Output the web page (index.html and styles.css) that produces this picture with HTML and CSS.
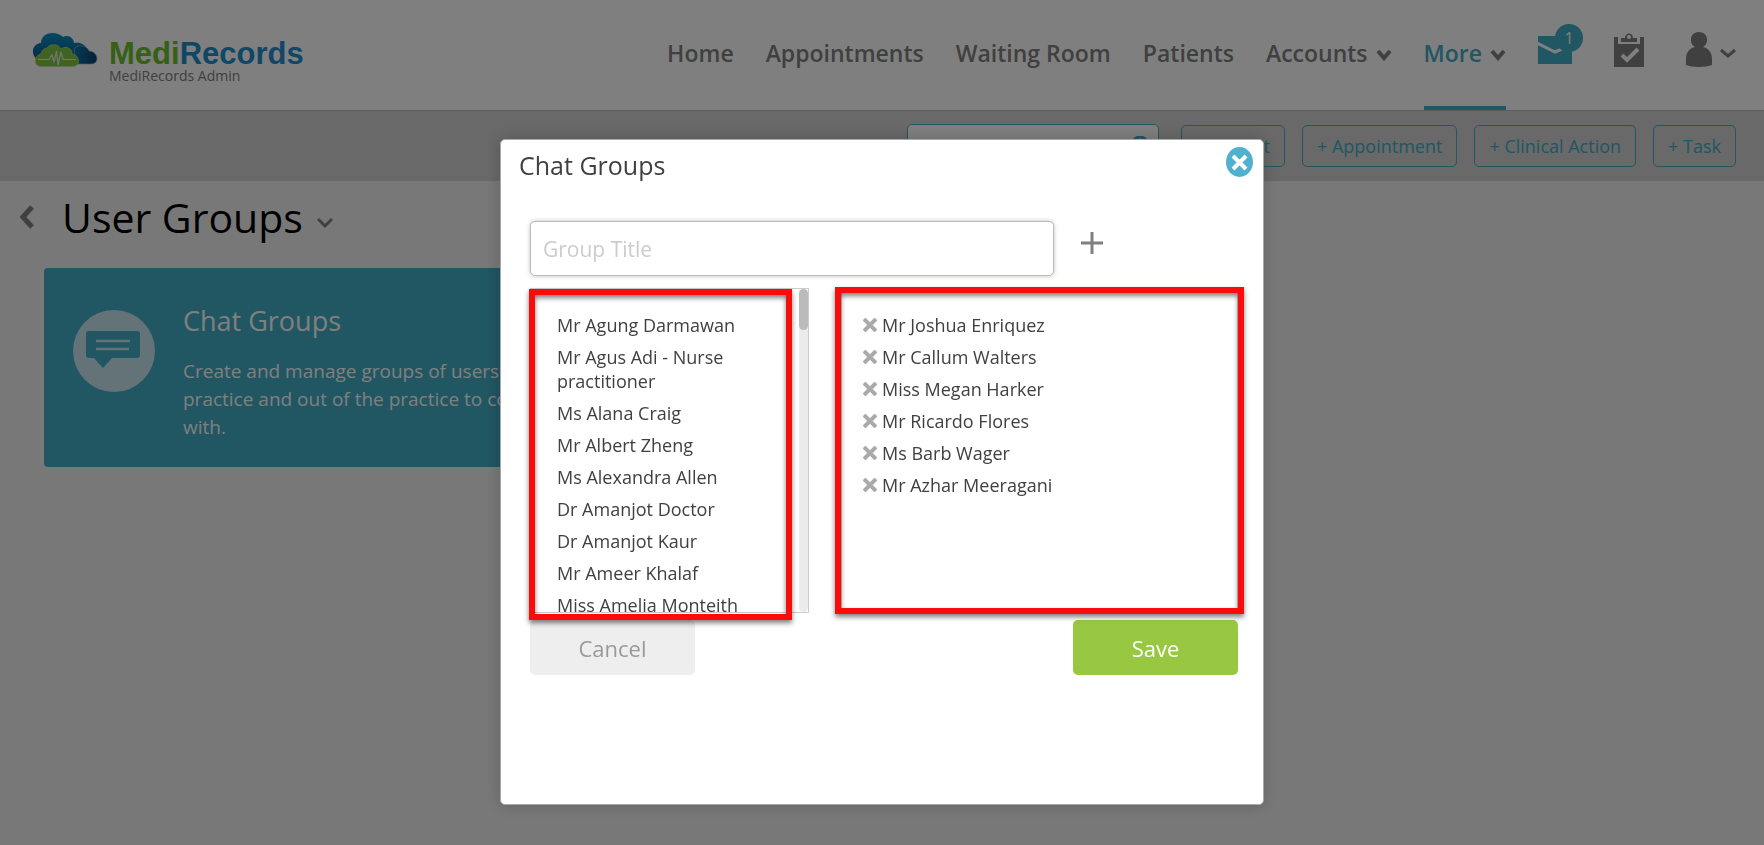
FILE: index.html
```html
<!DOCTYPE html>
<html lang="en">
<head>
    <meta charset="UTF-8">
    <meta name="viewport" content="width=device-width, initial-scale=1.0">
    <title>MediRecords - User Groups</title>
    <link rel="stylesheet" href="styles.css">
</head>
<body>
    <header class="header">
        <a class="logo" href="#">
            <svg class="logo-cloud" viewBox="0 0 66 36" width="66" height="36">
                <defs>
                    <linearGradient id="sky" x1="0" y1="0" x2="0" y2="1">
                        <stop offset="0" stop-color="#0a93c4"/>
                        <stop offset="1" stop-color="#0a4f86"/>
                    </linearGradient>
                    <linearGradient id="deep" x1="0" y1="0" x2="1" y2="0">
                        <stop offset="0" stop-color="#0a75a8"/>
                        <stop offset="1" stop-color="#0a3f72"/>
                    </linearGradient>
                </defs>
                <path fill="url(#sky)" d="M5 27C-1 24 -1 12 9 11C9 5 14 1 20 1C25 1 29 3 31 5C36 2 42 6 42 11C47 10 53 12 54 16L45 30L8 30Z"/>
                <path fill="url(#deep)" stroke="#8fb4c8" stroke-width="0.7" d="M42 17C44 13 54 12 57 19C62 19 65 23 65 27C65 30 62 32 59 32L44 32Z"/>
                <path fill="#80c544" stroke="#bfd9a8" stroke-width="0.7" d="M9 34.500C1 34 2 23 9 22C10 17 14 16 15 16C18 11 27 12 29 17C34 13 41 17 40 22C48 23 49 34 41 34.500Z"/>
                <path fill="none" stroke="#e2f0d6" stroke-width="1.200" d="M6 27.500H17L20 23L22 30L24.500 19L26 33L29 20L31 27.500H44"/>
            </svg>
            <span class="logo-text">
                <span class="logo-name"><span class="logo-medi">Medi</span><span class="logo-records">Records</span></span>
                <span class="logo-sub">MediRecords Admin</span>
            </span>
        </a>
        <nav class="nav">
            <a href="#">Home</a>
            <a href="#">Appointments</a>
            <a href="#">Waiting Room</a>
            <a href="#">Patients</a>
            <a href="#">Accounts <svg class="chevron" viewBox="0 0 16 12" width="16" height="12"><path d="M2 2L8 9L14 2"/></svg></a>
            <a class="active" href="#">More <svg class="chevron" viewBox="0 0 16 12" width="16" height="12"><path d="M2 2L8 9L14 2"/></svg></a>
        </nav>
        <div class="tools">
            <a class="mail" href="#" aria-label="Messages">
                <svg viewBox="0 0 34 28" width="34" height="28"><path fill="#42acc6" d="M0 0H34V28H0Z"/><path fill="none" stroke="#fff" stroke-width="3" d="M-1 7L17 16L24 13"/></svg>
                <span class="badge">1</span>
            </a>
            <a href="#" aria-label="Tasks">
                <svg viewBox="0 0 30 34" width="30" height="34">
                    <path fill="#808080" d="M0 4H4V11H26V4H30V34H0Z"/>
                    <path fill="#808080" d="M7 5H11C11 -1 19 -1 19 5H23V9H7Z"/>
                    <circle cx="15" cy="4" r="2" fill="#fff"/>
                    <path fill="none" stroke="#fff" stroke-width="4" d="M8 22L13 27L24 16"/>
                </svg>
            </a>
            <a class="user" href="#" aria-label="Account">
                <svg viewBox="0 0 26 35" width="26" height="35"><path fill="#808080" d="M13 0C23 0 23 12 17 15C22 16 26 20 26 27V33C20 35.500 6 35.500 0 33V27C0 20 4 16 9 15C3 12 3 0 13 0Z"/></svg>
                <svg class="chevron" viewBox="0 0 16 12" width="16" height="12"><path d="M1 2L8 8L15 2"/></svg>
            </a>
        </div>
    </header>

    <div class="toolbar">
        <div class="search">
            <input type="text" placeholder="Patient Search" aria-label="Patient Search">
            <svg viewBox="0 0 20 20" width="20" height="20"><circle cx="10" cy="8" r="7"/><path d="M14 13L19 19"/></svg>
        </div>
        <button type="button">+ Patient</button>
        <button type="button">+ Appointment</button>
        <button type="button">+ Clinical Action</button>
        <button type="button">+ Task</button>
    </div>

    <main class="content">
        <div class="page-title">
            <a class="back" href="#" aria-label="Back"><svg viewBox="0 0 14 24" width="14" height="24"><path d="M12 2L3 12L12 22"/></svg></a>
            <h1>User Groups</h1>
            <svg class="chevron" viewBox="0 0 16 12" width="16" height="12"><path d="M1 2L8 9L15 2"/></svg>
        </div>
        <a class="card" href="#">
            <svg class="card-icon" viewBox="0 0 82 82" width="82" height="82">
                <circle cx="41" cy="41" r="41" fill="#c8e6ee"/>
                <path fill="#42acc6" d="M16 21H64Q67 21 67 24V45Q67 48 64 48H39L30 58L21 48H16Q13 48 13 45V24Q13 21 16 21Z"/>
                <path fill="none" stroke="#c8e6ee" stroke-width="2.500" d="M23 31H57M23 39H56"/>
            </svg>
            <span class="card-body">
                <span class="card-title">Chat Groups</span>
                <span class="card-text">Create and manage groups of users in the practice and out of the practice to communicate with.</span>
            </span>
        </a>
    </main>

    <div class="overlay">
        <div class="modal" role="dialog" aria-labelledby="modal-title">
            <div class="modal-header">
                <h2 id="modal-title">Chat Groups</h2>
                <button class="close" type="button" aria-label="Close">
                    <svg viewBox="0 0 27 30" width="27" height="30"><ellipse cx="13.500" cy="15" rx="13.500" ry="15" fill="#50b1cf"/><path fill="none" stroke="#fff" stroke-width="4" d="M7 9L20 22M20 9L7 22"/></svg>
                </button>
            </div>
            <form class="group-form">
                <div class="title-row">
                    <input type="text" placeholder="Group Title" aria-label="Group Title">
                    <button class="add" type="button" aria-label="Add">
                        <svg viewBox="0 0 22 22" width="22" height="22"><path fill="none" stroke="#808080" stroke-width="3" d="M0 11H22M11 0V22"/></svg>
                    </button>
                </div>
                <div class="lists">
                    <div class="panel panel-all">
                        <ul class="people">
                            <li>Mr Agung Darmawan</li>
                            <li>Mr Agus Adi - Nurse practitioner</li>
                            <li>Ms Alana Craig</li>
                            <li>Mr Albert Zheng</li>
                            <li>Ms Alexandra Allen</li>
                            <li>Dr Amanjot Doctor</li>
                            <li>Dr Amanjot Kaur</li>
                            <li>Mr Ameer Khalaf</li>
                            <li>Miss Amelia Monteith</li>
                        </ul>
                        <div class="scrollbar"><div class="thumb"></div></div>
                        <div class="mark"></div>
                    </div>
                    <div class="panel panel-members">
                        <ul class="people members">
                            <li><button type="button" aria-label="Remove"><svg viewBox="0 0 14 14" width="14" height="14"><path d="M1 1L13 13M13 1L1 13"/></svg></button>Mr Joshua Enriquez</li>
                            <li><button type="button" aria-label="Remove"><svg viewBox="0 0 14 14" width="14" height="14"><path d="M1 1L13 13M13 1L1 13"/></svg></button>Mr Callum Walters</li>
                            <li><button type="button" aria-label="Remove"><svg viewBox="0 0 14 14" width="14" height="14"><path d="M1 1L13 13M13 1L1 13"/></svg></button>Miss Megan Harker</li>
                            <li><button type="button" aria-label="Remove"><svg viewBox="0 0 14 14" width="14" height="14"><path d="M1 1L13 13M13 1L1 13"/></svg></button>Mr Ricardo Flores</li>
                            <li><button type="button" aria-label="Remove"><svg viewBox="0 0 14 14" width="14" height="14"><path d="M1 1L13 13M13 1L1 13"/></svg></button>Ms Barb Wager</li>
                            <li><button type="button" aria-label="Remove"><svg viewBox="0 0 14 14" width="14" height="14"><path d="M1 1L13 13M13 1L1 13"/></svg></button>Mr Azhar Meeragani</li>
                        </ul>
                        <div class="mark"></div>
                    </div>
                </div>
                <div class="actions">
                    <button class="cancel" type="button">Cancel</button>
                    <button class="save" type="submit">Save</button>
                </div>
            </form>
        </div>
    </div>
</body>
</html>
```
FILE: styles.css
```css
* {
    box-sizing: border-box;
}
body {
    margin: 0;
    min-height: 100vh;
    font-family: "Open Sans", "Noto Sans", sans-serif;
    font-size: 18px;
    color: #404040;
    background-color: #f1f1f1;
}
a {
    color: inherit;
    text-decoration: none;
}
button, input {
    font-family: inherit;
}
h1, h2, ul {
    margin: 0;
    padding: 0;
    font-weight: 400;
}
svg {
    display: block;
}
.chevron {
    fill: none;
    stroke: #808080;
    stroke-width: 3;
}

/* header */
.header {
    display: flex;
    align-items: flex-start;
    height: 111px;
    padding: 0 28px 0 32px;
    background-color: #fff;
    border-bottom: 1px solid #bbb;
}
.logo {
    display: flex;
    gap: 11px;
    padding-top: 32px;
}
.logo-text {
    display: flex;
    flex-direction: column;
    padding-top: 6px;
}
.logo-name {
    font: bold 31px/31px "Liberation Sans", Arial, sans-serif;
}
.logo-medi {
    color: #6cc02c;
}
.logo-records {
    color: #248ccc;
}
.logo-sub {
    font-size: 14px;
    line-height: 14px;
    color: #808080;
}
.nav {
    display: flex;
    gap: 32px;
    margin-left: auto;
}
.nav a {
    display: flex;
    align-items: center;
    gap: 8px;
    height: 110px;
    font-size: 23px;
    font-weight: 600;
    color: #808080;
    border-bottom: 4px solid transparent;
}
.nav .chevron {
    margin-top: 4px;
    stroke-width: 4;
}
.nav .active {
    color: #42acc6;
    border-color: #42acc6;
}
.tools {
    display: flex;
    align-items: center;
    gap: 42px;
    margin-left: 32px;
    padding-top: 32px;
}
.mail {
    position: relative;
}
.badge {
    position: absolute;
    top: -12px;
    right: -11px;
    width: 28px;
    height: 28px;
    border-radius: 50%;
    background-color: #42acc6;
    color: #fff;
    font-size: 16px;
    line-height: 28px;
    text-align: center;
}
.user {
    display: flex;
    align-items: center;
    gap: 8px;
}
.user .chevron {
    margin-top: 8px;
}

/* toolbar */
.toolbar {
    display: flex;
    justify-content: flex-end;
    align-items: center;
    gap: 17px;
    height: 70px;
    padding: 0 28px;
    background-color: #d2d2d2;
}
.toolbar button {
    height: 42px;
    padding: 0 14px;
    border: 1px solid #42acc6;
    border-radius: 5px;
    background: none;
    color: #42acc6;
    font-size: 18px;
}
.search {
    display: flex;
    align-items: center;
    width: 252px;
    height: 44px;
    margin-right: 5px;
    padding: 0 8px;
    border: 1px solid #42acc6;
    border-radius: 5px;
    background-color: #fff;
}
.search input {
    flex: 1;
    min-width: 0;
    border: 0;
    font-size: 18px;
}
.search svg {
    fill: none;
    stroke: #42acc6;
    stroke-width: 3;
}

/* page */
.content {
    padding: 6px 20px;
}
.page-title {
    display: flex;
    align-items: center;
    gap: 14px;
    height: 60px;
}
.page-title h1 {
    margin-left: 14px;
    font-size: 41px;
    line-height: 60px;
    color: #000;
}
.page-title .chevron {
    margin-top: 12px;
}
.back svg {
    fill: none;
    stroke: #808080;
    stroke-width: 5;
}
.card {
    display: flex;
    gap: 28px;
    width: 600px;
    margin: 21px 24px;
    padding: 35px 24px 26px 29px;
    border-radius: 4px;
    background-color: #42acc6;
    color: #fff;
}
.card-icon {
    flex: none;
    margin-top: 7px;
}
.card-body {
    display: flex;
    flex-direction: column;
    gap: 18px;
}
.card-title {
    font-size: 27px;
    line-height: 36px;
}
.card-text {
    font-size: 19px;
    line-height: 28px;
}

/* dialog */
.overlay {
    position: fixed;
    inset: 0;
    display: flex;
    justify-content: center;
    align-items: flex-start;
    padding-top: 139px;
    background-color: rgba(0, 0, 0, 0.5);
}
.modal {
    width: 764px;
    min-height: 666px;
    border: 1px solid #aaa;
    border-radius: 5px;
    background-color: #fff;
    box-shadow: 0 0 16px rgba(0, 0, 0, 0.2);
}
.modal-header {
    display: flex;
    justify-content: space-between;
    align-items: flex-start;
    padding: 7px 10px 0 18px;
}
.modal-header h2 {
    font-size: 25px;
    line-height: 37px;
}
.modal button {
    border: 0;
    padding: 0;
    background: none;
}
.group-form {
    padding: 37px 25px 0 29px;
}
.title-row {
    display: flex;
    gap: 27px;
    align-items: flex-start;
}
.title-row input {
    width: 524px;
    height: 55px;
    padding: 0 12px;
    border: 1px solid #bbb;
    border-radius: 5px;
    box-shadow: 0 0 4px rgba(0, 0, 0, 0.25);
    font-size: 21px;
}
.title-row input::placeholder {
    color: #ccc;
}
.add {
    margin-top: 11px;
}
.lists {
    display: flex;
    justify-content: space-between;
    margin-top: 12px;
}
.panel {
    position: relative;
    display: flex;
    height: 325px;
    border: 1px solid #ccc;
}
.panel-all {
    width: 279px;
}
.panel-members {
    width: 397px;
}
.people {
    flex: 1;
    padding: 24px 0 0 26px;
    overflow: hidden;
    list-style: none;
    line-height: 24px;
}
.people li {
    margin-bottom: 8px;
}
.members {
    padding-left: 21px;
}
.members li {
    display: flex;
    align-items: center;
    gap: 5px;
}
.members svg {
    fill: none;
    stroke: #aaa;
    stroke-width: 4;
}
.scrollbar {
    width: 9px;
    border-radius: 5px;
    background-color: #ebebeb;
}
.thumb {
    height: 41px;
    border-radius: 5px;
    background-color: #bbb;
}
.mark {
    position: absolute;
    border: 6px solid #f80c0c;
    box-shadow: 0 3px 5px rgba(0, 0, 0, 0.5), inset 0 3px 5px rgba(0, 0, 0, 0.5);
    pointer-events: none;
}
.panel-all .mark {
    inset: 0 16px -8px -2px;
}
.panel-members .mark {
    inset: -2px -7px -2px -7px;
}
.actions {
    display: flex;
    justify-content: space-between;
    margin-top: 7px;
}
.actions button {
    width: 165px;
    height: 55px;
    border-radius: 5px;
    font-size: 22px;
}
.actions .cancel {
    background-color: #eee;
    color: #999;
}
.actions .save {
    background-color: #98c842;
    color: #fff;
}
```
